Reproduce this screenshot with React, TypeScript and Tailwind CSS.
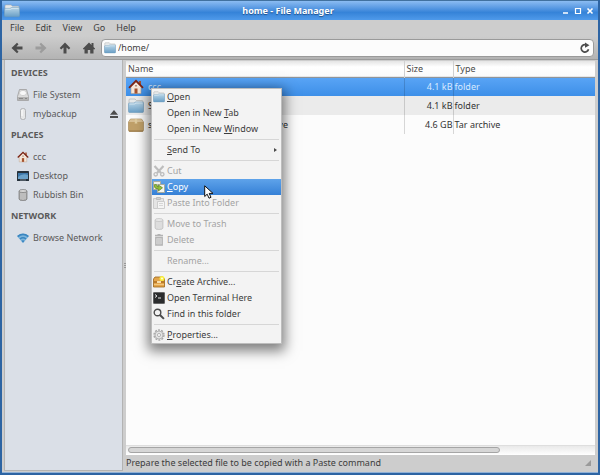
import type { ReactNode } from "react";

type IconProps = { className?: string };

const FolderIcon = ({ className = "size-3" }: IconProps) => (
    <svg viewBox="0 0 16 16" className={className} preserveAspectRatio="none">
        <defs>
            <linearGradient id="folder" x1="0" y1="0" x2="0" y2="1">
                <stop offset="0" stopColor="#b9d6e8" />
                <stop offset="1" stopColor="#6a9fc6" />
            </linearGradient>
        </defs>
        <path d="M1 13V2Q1 1 2 1H7L8.5 2.5H14Q15 2.5 15 3.500V13Z" fill="#e6e9ea" stroke="#a9adab" strokeWidth=".6" />
        <path d="M.5 6Q.5 5 1.5 5H6L7.5 4H14.500Q15.500 4 15.500 5V13.500Q15.500 14.500 14.500 14.500H1.500Q.500 14.500 .500 13.500Z" fill="url(#folder)" stroke="#6f9cbc" strokeWidth=".6" />
        <path d="M1.500 6H6.500L8 5H14.500" fill="none" stroke="#dcebf4" strokeWidth=".8" />
    </svg>
);

const HomeIcon = ({ className = "size-3" }: IconProps) => (
    <svg viewBox="0 0 16 16" className={className}>
        <path d="M11 2H13V6H11Z" fill="#a6502f" />
        <path d="M3 7.500L8 2.500L13 7.500V14.500H3Z" fill="#f4e6d8" stroke="#b79f8c" strokeWidth=".6" />
        <path d="M6.500 9.500H9.500V14.500H6.500Z" fill="#a5532f" />
        <path d="M7.300 6H8.700V7.500H7.300Z" fill="#8b7060" />
        <path d="M1 8.800L8 1.800L15 8.800" fill="none" stroke="#7c2413" strokeWidth="1.800" />
    </svg>
);

const PackageIcon = () => (
    <svg viewBox="0 0 16 16" className="size-4">
        <path d="M.500 5L2.500 2H13.500L15.500 5V13Q15.500 14.500 14 14.500H2Q.500 14.500 .500 13Z" fill="#c0a069" stroke="#a08049" strokeWidth=".6" />
        <path d="M.800 5L2.500 2.300H13.500L15.200 5Z" fill="#d8c096" />
        <path d="M6.800 2.300H9.200V7L8 6.300L6.800 7Z" fill="#e0cd9f" />
        <path d="M1 14H15" stroke="#8f7040" strokeWidth=".8" />
    </svg>
);

const DriveIcon = () => (
    <svg viewBox="0 0 12 12" className="size-3">
        <path d="M2.500 .500H9.500L11.500 7.500V11.500H.500V7.500Z" fill="#dcdcdc" stroke="#9c9c9c" strokeWidth=".8" />
        <ellipse cx="6" cy="4" rx="3.500" ry="2.600" fill="#f8f8f8" stroke="#b3b3b3" strokeWidth=".5" />
        <path d="M1 8H11V11H1Z" fill="#b3b3b3" />
        <path d="M2 9.500H6M8 9.500H10" stroke="#888" />
    </svg>
);

const UsbIcon = () => (
    <svg viewBox="0 0 12 12" className="size-3">
        <rect x="3.500" y=".500" width="5" height="11" rx="2" fill="#e6e7e8" stroke="#a5a7a9" strokeWidth=".8" />
        <path d="M5 2V8" stroke="#fff" />
    </svg>
);

const DesktopIcon = () => (
    <svg viewBox="0 0 12 12" className="size-3">
        <rect y="1" width="12" height="10" rx=".600" fill="#26313b" />
        <path d="M1 3H11V9H1Z" fill="#3c76a8" />
        <path d="M1 7Q5 3 11 5V9H1Z" fill="#6ba1c9" />
        <path d="M3 10H9" stroke="#9aa5ad" strokeWidth=".7" />
    </svg>
);

const BinIcon = ({ className = "size-3" }: IconProps) => (
    <svg viewBox="0 0 12 12" className={className}>
        <path d="M2 2V10Q2 11.500 6 11.500T10 10V2" fill="#a7a7a7" stroke="#777" strokeWidth=".7" />
        <path d="M4 4V10.500M6 4V11M8 4V10.500" stroke="#dedede" strokeWidth=".8" />
        <ellipse cx="6" cy="2" rx="4" ry="1.500" fill="#d8d8d8" stroke="#777" strokeWidth=".7" />
    </svg>
);

const WifiIcon = () => (
    <svg viewBox="0 0 12 12" className="size-3">
        <path d="M6 11L0 4.200Q6 -.500 12 4.200Z" fill="#7db5dc" />
        <path d="M.700 4.500Q6 .300 11.300 4.500M3 7Q6 4.500 9 7" fill="none" stroke="#3a86c0" strokeWidth="1.600" />
        <path d="M6 10.800L4.300 8.800Q6 7.600 7.700 8.800Z" fill="#3a86c0" />
    </svg>
);

const CutIcon = () => (
    <svg viewBox="0 0 12 12" className="size-3" fill="none" stroke="#bdbdbd">
        <path d="M1.500 1L8 8M10.500 1L4 8" strokeWidth="2.200" />
        <circle cx="2.700" cy="9.300" r="1.700" strokeWidth="1.300" />
        <circle cx="9.300" cy="9.300" r="1.700" strokeWidth="1.300" />
    </svg>
);

const CopyIcon = () => (
    <svg viewBox="0 0 12 12" className="size-3">
        <path d="M.500 .500H7.500V8.500H.500Z" fill="#eef0e8" stroke="#a9ab9f" />
        <path d="M4.500 3.500H11.500V11.500H4.500Z" fill="#f4f5ee" stroke="#a9ab9f" />
        <path d="M1.500 3.500V6Q2 8 5.500 8V10L9.500 6.800L5.500 4V6Q3.500 6 3.500 3.500Z" fill="#93bd3a" stroke="#5d8420" strokeWidth=".7" />
    </svg>
);

const PasteIcon = () => (
    <svg viewBox="0 0 12 12" className="size-3">
        <path d="M.500 1.500H10.500V11.500H.500Z" fill="#e4e4e4" stroke="#cbcbcb" />
        <path d="M3.500 .500H7.500V2.500H3.500Z" fill="#d2d2d2" stroke="#bdbdbd" />
        <path d="M4.500 4.500H11.500V11.500H4.500Z" fill="#f4f4f4" stroke="#cdcdcd" />
        <path d="M6 6.500H10M6 8.500H10" stroke="#d6d6d6" />
    </svg>
);

const DeleteIcon = () => (
    <svg viewBox="0 0 12 12" className="size-3">
        <path d="M2 1.500H10M4.500 .700H7.500" stroke="#b3b3b3" strokeWidth="1.400" />
        <path d="M2.800 3.500V11H9.200V3.500Z" fill="#e6e6e6" stroke="#b3b3b3" strokeWidth="1.400" />
        <path d="M5 4.500V10M7 4.500V10" stroke="#b3b3b3" />
    </svg>
);

const ArchiveIcon = () => (
    <svg viewBox="0 0 12 12" className="size-3">
        <path d="M.500 3L2 1H10L11.500 3V11H.500Z" fill="#e3a54b" stroke="#9b6418" strokeWidth=".8" />
        <path d="M1 6H11" stroke="#8f500f" />
        <path d="M4 5H8V7H4Z" fill="#f7dfae" />
        <path d="M1 8.500H11" stroke="#f2c77d" />
        <circle cx="9" cy="2.500" r="2.500" fill="#f9ef3a" />
        <circle cx="9" cy="2.500" r="1" fill="#fffde0" />
    </svg>
);

const TerminalIcon = () => (
    <svg viewBox="0 0 12 12" className="size-3">
        <rect x=".400" y=".400" width="11.200" height="11.200" rx=".800" fill="#2b2c2d" stroke="#555" strokeWidth=".8" />
        <path d="M2 2.500L4 4L2 5.500M5 6H8" fill="none" stroke="#e5e5e5" />
    </svg>
);

const SearchIcon = () => (
    <svg viewBox="0 0 12 12" className="size-3" fill="none" stroke="#4c4c4c">
        <circle cx="4.500" cy="4.500" r="3.300" strokeWidth="1.400" />
        <path d="M7 7L10.900 10.900" strokeWidth="2" />
    </svg>
);

const GearIcon = () => (
    <svg viewBox="0 0 12 12" className="size-3" fill="none" stroke="#a8a8a8">
        <circle cx="6" cy="6" r="5" strokeWidth="1.400" strokeDasharray="2 1.140" />
        <circle cx="6" cy="6" r="4" fill="#e4e4e4" strokeWidth=".8" />
        <circle cx="6" cy="6" r="1.600" fill="#f5f5f5" strokeWidth=".8" />
    </svg>
);

// Solid arrow, pointing left by default
const ArrowIcon = ({ className }: IconProps) => (
    <svg viewBox="0 0 12 12" className={className}>
        <path d="M.500 6L6 .700L7.500 2.200L5.500 4.500H11.500V7.500H5.500L7.500 9.800L6 11.300Z" fill="currentColor" />
    </svg>
);

type MenuEntry = {
    label: ReactNode;
    icon?: ReactNode;
    disabled?: boolean;
    active?: boolean;
    submenu?: boolean;
};

const menuGroups: MenuEntry[][] = [
    [
        { label: <><u>O</u>pen</>, icon: <FolderIcon /> },
        { label: <>Open in New <u>T</u>ab</> },
        { label: <>Open in New <u>W</u>indow</> },
    ],
    [{ label: <><u>S</u>end To</>, submenu: true }],
    [
        { label: "Cut", icon: <CutIcon />, disabled: true },
        { label: <><u>C</u>opy</>, icon: <CopyIcon />, active: true },
        { label: "Paste Into Folder", icon: <PasteIcon />, disabled: true },
    ],
    [
        { label: "Move to Trash", icon: <BinIcon className="size-3 opacity-40" />, disabled: true },
        { label: "Delete", icon: <DeleteIcon />, disabled: true },
    ],
    [{ label: "Rename...", disabled: true }],
    [
        { label: <>Cr<u>e</u>ate Archive...</>, icon: <ArchiveIcon /> },
        { label: "Open Terminal Here", icon: <TerminalIcon /> },
        { label: "Find in this folder", icon: <SearchIcon /> },
    ],
    [{ label: <><u>P</u>roperties...</>, icon: <GearIcon /> }],
];

const places = [
    {
        title: "DEVICES",
        items: [
            { name: "File System", icon: <DriveIcon /> },
            { name: "mybackup", icon: <UsbIcon />, eject: true },
        ],
    },
    {
        title: "PLACES",
        items: [
            { name: "ccc", icon: <HomeIcon /> },
            { name: "Desktop", icon: <DesktopIcon /> },
            { name: "Rubbish Bin", icon: <BinIcon /> },
        ],
    },
    { title: "NETWORK", items: [{ name: "Browse Network", icon: <WifiIcon /> }] },
];

const files = [
    { name: "ccc", icon: <HomeIcon className="size-4" />, size: "4.1 kB", type: "folder", row: "bg-linear-to-b from-[#5aa5f6] to-[#3d8fe8] text-[#d8eaff]" },
    { name: "S", icon: <FolderIcon className="size-4" />, size: "4.1 kB", type: "folder", row: "bg-[#ebebeb]" },
    { name: <><span>s</span><span>ve</span></>, icon: <PackageIcon />, size: "4.6 GB", type: "Tar archive", row: "" },
];

function TitleBar() {
    return (
        <header className="flex h-5 shrink-0 items-center border-t border-[#41719f] bg-linear-to-b from-[#8bbcf2] via-[#3583d8] via-60% to-[#4f9aea] px-0.5">
            <FolderIcon className="h-3.5 w-4" />
            <h1 className="flex-1 pr-1 text-center font-bold text-white [text-shadow:0_1px_1px_#1f4f8a]">home - File Manager</h1>
            <div className="flex">
                <button aria-label="Minimize" className="flex size-3 items-center justify-center">
                    <svg viewBox="0 0 8 8" className="size-2"><path d="M1 6H6" stroke="#fff" strokeWidth="1.500" /></svg>
                </button>
                <button aria-label="Maximize" className="flex size-3 items-center justify-center">
                    <svg viewBox="0 0 8 8" className="size-2"><path d="M1.500 1.500H6.500V6.500H1.500Z" fill="none" stroke="#fff" strokeWidth="1.200" /></svg>
                </button>
                <button aria-label="Close" className="flex size-3 items-center justify-center">
                    <svg viewBox="0 0 8 8" className="size-2"><path d="M1.500 1.500L6.500 6.500M6.500 1.500L1.500 6.500" stroke="#fff" strokeWidth="1.600" /></svg>
                </button>
            </div>
        </header>
    );
}

function Toolbar() {
    return (
        <div className="flex h-6 shrink-0 items-center border-b border-[#9b9b9b] bg-linear-to-b from-[#cdcdcd] to-[#b3b3b3] pr-1 pl-[3px] text-[#4c4c4c]">
            <button aria-label="Back" className="flex h-5 w-6 items-center justify-center"><ArrowIcon className="size-3" /></button>
            <button aria-label="Forward" disabled className="flex h-5 w-6 items-center justify-center text-[#9c9c9c]"><ArrowIcon className="size-3 rotate-180" /></button>
            <button aria-label="Up" className="flex h-5 w-6 items-center justify-center"><ArrowIcon className="size-3 rotate-90" /></button>
            <button aria-label="Home" className="flex h-5 w-6 items-center justify-center">
                <svg viewBox="0 0 12 12" className="size-3" fill="currentColor">
                    <path d="M0 6.500L6 .500L8.500 3V1H10.500V5L12 6.500V7.200H10.500V11.500H7.200V8H4.800V11.500H1.500V7.200H0Z" />
                </svg>
            </button>
            <div className="flex h-4.5 flex-1 items-center gap-0.5 rounded-sm border border-[#9a9a9a] bg-[#fcfcfc] px-0.5">
                <FolderIcon className="size-3" />
                <input aria-label="Location" defaultValue="/home/" className="min-w-0 flex-1 bg-transparent text-[#3c3c3c] outline-none" />
                <button aria-label="Reload">
                    <svg viewBox="0 0 12 12" className="size-3">
                        <path d="M9.500 7.200A3.700 3.700 0 1 1 7.500 3" fill="none" stroke="#4c4c4c" strokeWidth="1.700" />
                        <path d="M6 .500L10.500 3.200L6 5.800Z" fill="#4c4c4c" />
                    </svg>
                </button>
            </div>
        </div>
    );
}

function Sidebar() {
    return (
        <nav className="w-[119px] shrink-0 border border-t-0 border-[#b3b3b3] bg-[#dadfe7] pt-px text-[#5a5a5a]">
            {places.map((group) => (
                <section key={group.title}>
                    <h2 className="flex h-6 items-center pl-1.5 font-bold">{group.title}</h2>
                    <ul>
                        {group.items.map((item) => (
                            <li key={item.name} className="flex h-[19px] items-center gap-1 pr-1 pl-3">
                                {item.icon}
                                <a href="#" className="flex-1">{item.name}</a>
                                {"eject" in item && (
                                    <button aria-label="Eject">
                                        <svg viewBox="0 0 8 8" className="size-2" fill="#4c4c4c"><path d="M4 0L8 4.800H0ZM0 6H8V8H0Z" /></svg>
                                    </button>
                                )}
                            </li>
                        ))}
                    </ul>
                </section>
            ))}
        </nav>
    );
}

function FileList() {
    return (
        <main className="flex min-w-0 flex-1 flex-col bg-[#fcfcfc]">
            <table className="w-full table-fixed border-collapse text-left text-[#333]">
                <thead>
                    <tr className="h-4 border-b border-[#8f9499] bg-linear-to-b from-[#e4e4e4] via-white via-40% to-[#fafafa] text-[#4a4a4a]">
                        <th className="border-r border-[#d0d0d0] pl-0.5 font-normal">Name</th>
                        <th className="w-[49px] border-r border-[#d0d0d0] pl-0.5 font-normal">Size</th>
                        <th className="w-[142px] pl-0.5 font-normal">Type</th>
                    </tr>
                </thead>
                <tbody>
                    {files.map((file, idx) => (
                        <tr key={idx} className={`h-[19px] ${file.row}`}>
                            <td className="border-r border-black/15 pl-0.5">
                                <div className="flex items-center gap-1">
                                    {file.icon}
                                    <span className="flex w-[140px] justify-between">{file.name}</span>
                                </div>
                            </td>
                            <td className="border-r border-black/15 text-right">{file.size}</td>
                            <td className="pl-px">{file.type}</td>
                        </tr>
                    ))}
                </tbody>
            </table>
            <div className="mt-auto h-2.5 border-t border-[#dedede] bg-linear-to-b from-[#e9e9e9] to-white px-0.5 pt-px">
                <div className="h-1.5 w-4/5 rounded-full border border-[#a5a5a5] bg-[#d6d6d6]" />
            </div>
        </main>
    );
}

function ContextMenu() {
    return (
        <div role="menu" className="absolute top-[88px] left-[149px] w-[131px] border border-[#bdbdbd] bg-[#f3f3f3] text-[#3c3c3c] shadow-[0_4px_12px_3px_rgba(0,0,0,0.5)]">
            {menuGroups.map((group, idx) => (
                <div key={idx}>
                    {idx > 0 && <hr className="mx-0.5 my-0.5 border-[#d6d6d6]" />}
                    {group.map((entry, i) => (
                        <button
                            key={i}
                            role="menuitem"
                            disabled={entry.disabled}
                            className={`flex h-4 w-full items-center gap-0.5 px-px text-left disabled:text-[#a3a3a3] ${
                                entry.active ? "bg-linear-to-b from-[#5ea3ea] to-[#3580d6] text-white" : ""
                            }`}
                        >
                            <span className="w-3 shrink-0">{entry.icon}</span>
                            <span className="flex-1">{entry.label}</span>
                            {entry.submenu && (
                                <svg viewBox="0 0 8 8" className="size-2"><path d="M2 2L5 4L2 6Z" fill="#4c4c4c" /></svg>
                            )}
                        </button>
                    ))}
                </div>
            ))}
        </div>
    );
}

export default function App() {
    return (
        <div className="relative flex h-screen flex-col border-x-2 border-b-2 border-[#2d64a3] bg-[#cdcdcd] font-['Noto_Sans',sans-serif] text-[9px] leading-3">
            <TitleBar />
            <nav className="flex h-4 shrink-0 items-center gap-[11px] px-2 text-[#3c3c3c]">
                {["File", "Edit", "View", "Go", "Help"].map((name) => (
                    <button key={name}>{name}</button>
                ))}
            </nav>
            <Toolbar />
            <div className="flex min-h-0 flex-1 border-b border-[#8fb0d6] pr-[3px] pb-px pl-0.5">
                <Sidebar />
                <div className="flex w-[3px] shrink-0 flex-col items-center justify-center gap-px">
                    <span className="h-px w-0.5 bg-[#999]" />
                    <span className="h-px w-0.5 bg-[#999]" />
                    <span className="h-px w-0.5 bg-[#999]" />
                </div>
                <div className="flex min-w-0 flex-1 flex-col pt-px">
                    <FileList />
                    <footer className="flex h-4 shrink-0 items-center justify-between pr-1 text-[#3c3c3c]">
                        <span>Prepare the selected file to be copied with a Paste command</span>
                        <svg viewBox="0 0 5 5" className="size-1.5"><path d="M5 0V5H0Z" fill="#9a9a9a" /></svg>
                    </footer>
                </div>
            </div>
            <ContextMenu />
            <svg viewBox="0 0 10 14" className="pointer-events-none absolute top-[185px] left-[202px] h-3.5 w-2.5">
                <path d="M.700 .800V11.500L3.200 9.200L5 13.200L7 12.300L5.200 8.400H9Z" fill="#fff" stroke="#111" />
            </svg>
        </div>
    );
}
